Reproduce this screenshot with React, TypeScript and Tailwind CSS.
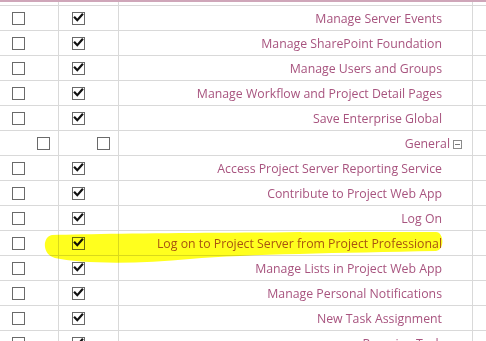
import React from "react";

const rows: { label: string; a: boolean; b: boolean; group?: boolean }[] = [
  { label: "Manage Server Events", a: false, b: true },
  { label: "Manage SharePoint Foundation", a: false, b: true },
  { label: "Manage Users and Groups", a: false, b: true },
  { label: "Manage Workflow and Project Detail Pages", a: false, b: true },
  { label: "Save Enterprise Global", a: false, b: true },
  { label: "General", a: false, b: false, group: true },
  { label: "Access Project Server Reporting Service", a: false, b: true },
  { label: "Contribute to Project Web App", a: false, b: true },
  { label: "Log On", a: false, b: true },
  { label: "Log on to Project Server from Project Professional", a: false, b: true },
  { label: "Manage Lists in Project Web App", a: false, b: true },
  { label: "Manage Personal Notifications", a: false, b: true },
  { label: "New Task Assignment", a: false, b: true },
  { label: "Reassign Task", a: false, b: true },
];

function Box({ checked }: { checked: boolean }) {
  return (
    <div className="relative w-[13px] h-[13px] border-[1.5px] border-[#6a6a6a] bg-white">
      {checked && (
        <svg viewBox="0 0 13 13" className="absolute left-[-1.5px] top-[-1.5px] w-[13px] h-[13px]">
          <path d="M2.8 6.6 L5.3 9.2 L10.2 3.6" fill="none" stroke="#111" strokeWidth="2.2" strokeLinecap="square" />
        </svg>
      )}
    </div>
  );
}

export default function App() {
  return (
    <div
      className="relative w-[486px] h-[341px] overflow-hidden bg-white"
      style={{ fontFamily: '"Open Sans", "Noto Sans", sans-serif' }}
    >
      <div className="grid grid-cols-[59px_60px_354px_1fr] h-[5px] border-t-2 border-[#cfa6b9]">
        <div className="border-r border-[#d9d9d9]" />
        <div className="border-r border-[#d9d9d9]" />
        <div className="border-r border-[#d9d9d9]" />
        <div />
      </div>
      {rows.map((r, i) => (
        <div key={i} className="grid grid-cols-[59px_60px_354px_1fr] h-[25px] border-t border-[#d9d9d9]">
          <div className={`border-r border-[#d9d9d9] flex items-center ${r.group ? "pl-[37px]" : "pl-[12px]"}`}>
            <Box checked={r.a} />
          </div>
          <div className={`border-r border-[#d9d9d9] flex items-center ${r.group ? "pl-[38px]" : "pl-[13px]"}`}>
            <Box checked={r.b} />
          </div>
          <div
            className={`border-r border-[#d9d9d9] flex items-center justify-end pt-[2px] text-[12.3px] text-[#a8547f] whitespace-nowrap ${
              r.group ? "pr-[10px]" : "pr-[30px]"
            }`}
          >
            <span>{r.label}</span>
            {r.group && (
              <span className="ml-[3px] w-[9px] h-[9px] border border-[#8a8a8a] flex items-center justify-center">
                <span className="w-[5px] h-px bg-[#7a7a7a]" />
              </span>
            )}
          </div>
          <div />
        </div>
      ))}
      <svg className="absolute left-0 top-0 pointer-events-none mix-blend-multiply" width="486" height="341">
        <path
          d="M52 235 C 120 233, 300 232, 436 232 C 444 232, 445 250, 436 251 C 340 253, 250 254, 190 259 C 140 264, 80 264, 55 258 C 42 255, 42 237, 52 235 Z"
          fill="#ffff1e"
        />
      </svg>
    </div>
  );
}
